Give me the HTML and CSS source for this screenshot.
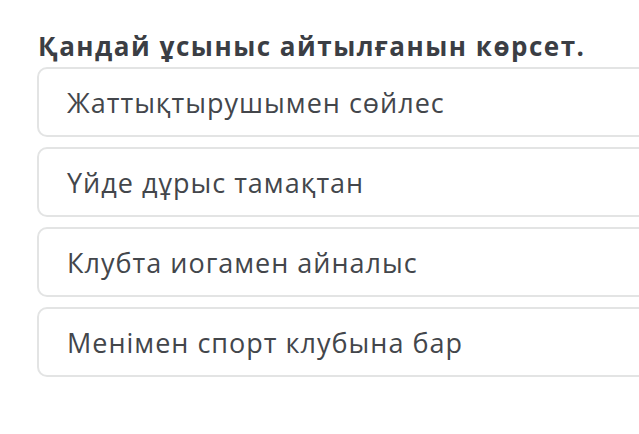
FILE: index.html
```html
<!DOCTYPE html>
<html lang="kk">
<head>
<meta charset="utf-8">
<link rel="stylesheet" href="styles.css">
</head>
<body>
<div class="page">
  <h1 class="question">Қандай ұсыныс айтылғанын көрсет.</h1>
  <div class="options">
    <div class="option">Жаттықтырушымен сөйлес</div>
    <div class="option">Үйде дұрыс тамақтан</div>
    <div class="option">Клубта иогамен айналыс</div>
    <div class="option">Менімен спорт клубына бар</div>
  </div>
</div>
</body>
</html>
```
FILE: styles.css
```css
html, body {
  margin: 0;
  padding: 0;
  background: #ffffff;
  overflow: hidden;
}
.page {
  font-family: "Open Sans", "Noto Sans", sans-serif;
  padding: 28px 0 0 37px;
  width: 660px;
}
.question {
  margin: 0 0 0 1px;
  font-size: 26px;
  font-weight: 700;
  letter-spacing: 1.5px;
  line-height: 36px;
  color: #3b3e44;
  height: 39px;
}
.options {
  display: flex;
  flex-direction: column;
  gap: 10px;
}
.option {
  box-sizing: border-box;
  height: 70px;
  border: 2px solid #e3e4e4;
  border-radius: 10px;
  padding: 0 28px;
  display: flex;
  align-items: center;
  font-size: 27px;
  letter-spacing: 1px;
  color: #43464b;
  background: #fff;
}
```
